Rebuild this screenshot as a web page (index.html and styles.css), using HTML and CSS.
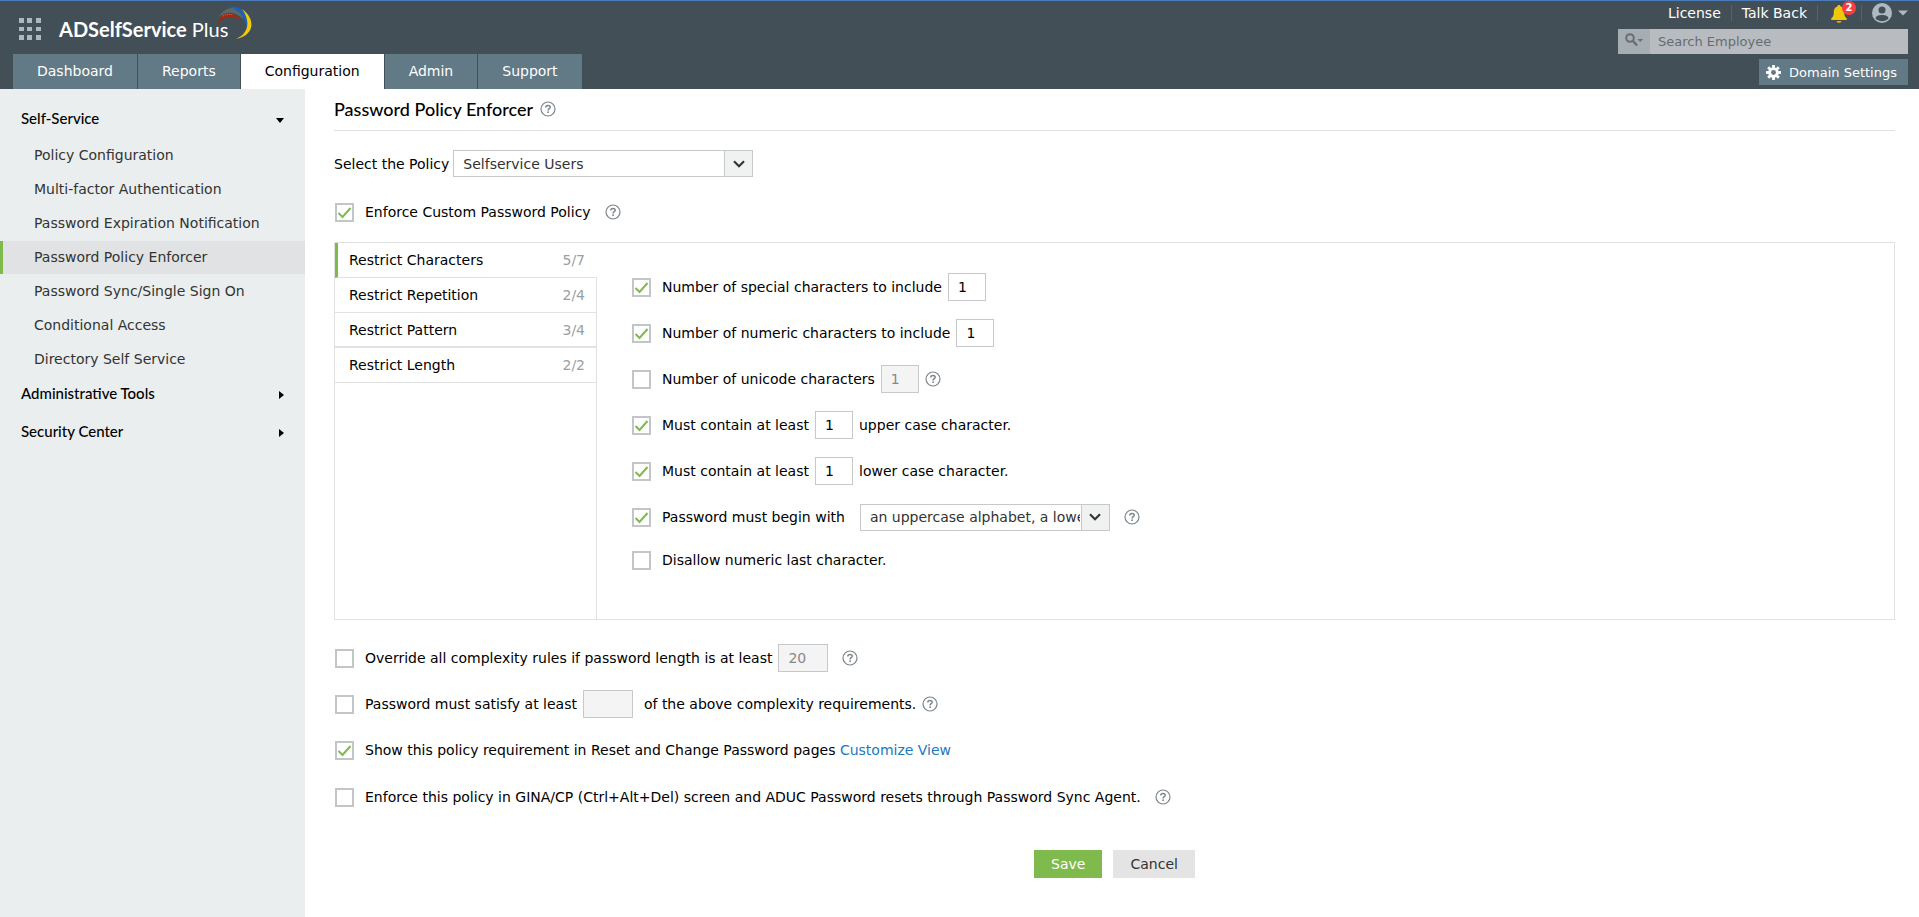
FILE: index.html
```html
<!DOCTYPE html>
<html lang="en">
<head>
  <meta charset="UTF-8">
  <meta name="viewport" content="width=device-width, initial-scale=1">
  <title>ADSelfService Plus</title>
  <link rel="stylesheet" href="styles.css">
</head>
<body>

<svg class="sprite" aria-hidden="true">
  <symbol id="help" viewBox="0 0 16 16">
    <circle cx="8" cy="8" r="7" fill="none" stroke="#7b858d" stroke-width="1.2"/>
    <path d="M5.8 6.5C5.8 5.1 6.7 4.4 8 4.4s2.2.7 2.2 1.8c0 1.5-2.1 1.5-2.1 3.2" fill="none" stroke="#7b858d" stroke-width="1.5"/>
    <rect x="7.3" y="10.4" width="1.6" height="1.6" fill="#7b858d"/>
  </symbol>
  <symbol id="chevron" viewBox="0 0 12 8">
    <path d="M1 1.2L6 6.2L11 1.2" fill="none" stroke="#30363a" stroke-width="2.2"/>
  </symbol>
</svg>

<header class="header">
  <div class="header-left">
    <div class="brand">
      <button class="apps" aria-label="Applications">
        <svg width="22" height="22" viewBox="0 0 22 22" fill="#adb8c0">
          <path d="M0 0h5v5H0zM8 0h5v5H8zM17 0h5v5h-5zM0 9h5v4H0zM8 9h5v4H8zM17 9h5v4h-5zM0 17h5v5H0zM8 17h5v5H8zM17 17h5v5h-5z"/>
        </svg>
      </button>
      <a href="#" class="logo">
        <b>ADSelfService</b> Plus
        <svg class="logo-arc" width="35" height="34" viewBox="0 0 35 34">
          <path d="M1 11C6 1 18-1 27 7L25 13C17 5 8 5 1 11z" fill="#5a6a6b"/>
          <path d="M11 1C22-2 33 8 29 25C28 12 22 4 11 1z" fill="#1f5fb5"/>
          <path d="M24 3C37 12 38 29 18 33C32 27 32 14 24 3z" fill="#f5cb0c"/>
          <path d="M18 33C22 32 25 30 27 28L25 30C23 31 21 32 18 33z" fill="#c96a22"/>
          <path d="M0 19C1 6 15 2 25 16C15 9 6 9 0 19z" fill="#9c2b12"/>
          <path d="M5 10C9 8 12 8 15 9" fill="none" stroke="#ff5a48" stroke-width="1" stroke-dasharray="1 1"/>
        </svg>
      </a>
    </div>
    <nav class="tabs">
      <a href="#">Dashboard</a>
      <a href="#">Reports</a>
      <a href="#" class="active">Configuration</a>
      <a href="#">Admin</a>
      <a href="#">Support</a>
    </nav>
  </div>

  <div class="header-right">
    <div class="user-links">
      <a href="#">License</a>
      <a href="#">Talk Back</a>
      <button class="bell" aria-label="Notifications">
        <svg width="16" height="18" viewBox="0 0 16 18">
          <path d="M8 0c1 0 1.600.6 1.600 1.500C12 2.200 13.200 4.200 13.200 7c0 3.500.8 4.800 2.500 6.300V15H.3v-1.700C2 11.800 2.800 10.500 2.800 7c0-2.800 1.200-4.800 3.600-5.500C6.400.6 7 0 8 0z" fill="#f0c808"/>
          <path d="M5.500 16h5c-.3 1.300-1.200 2-2.500 2s-2.200-.7-2.500-2z" fill="#f0a008"/>
        </svg>
        <span class="badge">2</span>
      </button>
      <button class="account" aria-label="Account">
        <svg width="20" height="20" viewBox="0 0 20 20">
          <circle cx="10" cy="10" r="10" fill="#aeb9c1"/>
          <circle cx="10" cy="7" r="3.500" fill="#434f57"/>
          <path d="M3.500 15.500C4 12.500 7 12 10 12s6 .5 6.500 3.500c-3.500 3.500-9.500 3.500-13 0z" fill="#434f57"/>
        </svg>
        <svg width="10" height="6" viewBox="0 0 10 6"><path d="M0 .5h10L5 5.500z" fill="#aeb9c1"/></svg>
      </button>
    </div>
    <div class="search">
      <button aria-label="Search options">
        <svg width="18" height="14" viewBox="0 0 18 14">
          <circle cx="5" cy="5" r="3.800" fill="none" stroke="#676e74" stroke-width="2"/>
          <path d="M8 8l4 4.500" stroke="#676e74" stroke-width="2.400"/>
          <path d="M12.500 6H18l-2.700 3z" fill="#676e74"/>
        </svg>
      </button>
      <input type="text" placeholder="Search Employee" aria-label="Search Employee">
    </div>
    <button class="domain">
      <svg width="15" height="15" viewBox="0 0 16 16">
        <g fill="#fff">
          <path id="tooth" d="M6.500 0h3v16h-3z"/>
          <use href="#tooth" transform="rotate(45 8 8)"/>
          <use href="#tooth" transform="rotate(90 8 8)"/>
          <use href="#tooth" transform="rotate(135 8 8)"/>
          <circle cx="8" cy="8" r="5.600"/>
        </g>
        <circle cx="8" cy="8" r="2.600" fill="#627986"/>
      </svg>
      Domain Settings
    </button>
  </div>
</header>

<div class="page">
  <aside class="sidebar">
    <button class="group">Self-Service <svg width="8" height="5" viewBox="0 0 8 5"><path d="M0 0h8L4 5z"/></svg></button>
    <nav class="menu">
      <a href="#">Policy Configuration</a>
      <a href="#">Multi-factor Authentication</a>
      <a href="#">Password Expiration Notification</a>
      <a href="#" class="active">Password Policy Enforcer</a>
      <a href="#">Password Sync/Single Sign On</a>
      <a href="#">Conditional Access</a>
      <a href="#">Directory Self Service</a>
    </nav>
    <button class="group">Administrative Tools <svg width="5" height="8" viewBox="0 0 5 8"><path d="M0 0v8l5-4z"/></svg></button>
    <button class="group">Security Center <svg width="5" height="8" viewBox="0 0 5 8"><path d="M0 0v8l5-4z"/></svg></button>
  </aside>

  <main class="content">
    <h1>Password Policy Enforcer <svg class="help"><use href="#help"/></svg></h1>

    <div class="policy">
      <label for="policy">Select the Policy</label>
      <div class="select policy-select">
        <select id="policy"><option>Selfservice Users</option></select>
        <span class="arrow"><svg width="12" height="8"><use href="#chevron"/></svg></span>
      </div>
    </div>

    <div class="row enforce">
      <input type="checkbox" id="enforce" checked>
      <label for="enforce">Enforce Custom Password Policy</label>
      <svg class="help far"><use href="#help"/></svg>
    </div>

    <section class="panel">
      <div class="rule-tabs">
        <button class="active">Restrict Characters <span>5/7</span></button>
        <button>Restrict Repetition <span>2/4</span></button>
        <button>Restrict Pattern <span>3/4</span></button>
        <button>Restrict Length <span>2/2</span></button>
      </div>
      <div class="rules">
        <div class="row">
          <input type="checkbox" id="special" checked>
          <label for="special">Number of special characters to include</label>
          <input type="text" value="1" aria-label="Special characters">
        </div>
        <div class="row">
          <input type="checkbox" id="numeric" checked>
          <label for="numeric">Number of numeric characters to include</label>
          <input type="text" value="1" aria-label="Numeric characters">
        </div>
        <div class="row">
          <input type="checkbox" id="unicode">
          <label for="unicode">Number of unicode characters</label>
          <input type="text" value="1" aria-label="Unicode characters" disabled>
          <svg class="help"><use href="#help"/></svg>
        </div>
        <div class="row">
          <input type="checkbox" id="upper" checked>
          <label for="upper">Must contain at least</label>
          <input type="text" id="upper-count" value="1">
          <label for="upper-count">upper case character.</label>
        </div>
        <div class="row">
          <input type="checkbox" id="lower" checked>
          <label for="lower">Must contain at least</label>
          <input type="text" id="lower-count" value="1">
          <label for="lower-count">lower case character.</label>
        </div>
        <div class="row">
          <input type="checkbox" id="begin" checked>
          <label for="begin">Password must begin with</label>
          <div class="select begin-select">
            <select aria-label="Password must begin with"><option>an uppercase alphabet, a lowercase alphabet</option></select>
            <span class="arrow"><svg width="12" height="8"><use href="#chevron"/></svg></span>
          </div>
          <svg class="help far"><use href="#help"/></svg>
        </div>
        <div class="row">
          <input type="checkbox" id="last">
          <label for="last">Disallow numeric last character.</label>
        </div>
      </div>
    </section>

    <div class="options">
      <div class="row">
        <input type="checkbox" id="override">
        <label for="override">Override all complexity rules if password length is at least</label>
        <input type="text" class="wide" value="20" aria-label="Password length" disabled>
        <svg class="help far"><use href="#help"/></svg>
      </div>
      <div class="row satisfy">
        <input type="checkbox" id="satisfy">
        <label for="satisfy">Password must satisfy at least</label>
        <input type="text" class="wide" id="satisfy-count" disabled>
        <label for="satisfy-count">of the above complexity requirements.</label>
        <svg class="help"><use href="#help"/></svg>
      </div>
      <div class="row">
        <input type="checkbox" id="show" checked>
        <span><label for="show">Show this policy requirement in Reset and Change Password pages</label> <a href="#">Customize View</a></span>
      </div>
      <div class="row">
        <input type="checkbox" id="gina">
        <label for="gina">Enforce this policy in GINA/CP (Ctrl+Alt+Del) screen and ADUC Password resets through Password Sync Agent.</label>
        <svg class="help far"><use href="#help"/></svg>
      </div>
    </div>

    <div class="actions">
      <button class="save">Save</button>
      <button class="cancel">Cancel</button>
    </div>
  </main>
</div>

</body>
</html>
```
FILE: styles.css
```css
* {
  box-sizing: border-box;
}
body {
  margin: 0;
  min-height: 100vh;
  display: flex;
  flex-direction: column;
  background: #fff;
  color: #000;
  font-family: "DejaVu Sans", Verdana, sans-serif;
  font-size: 14px;
}
button, input, select {
  font: inherit;
  color: inherit;
  border-radius: 0;
}
button {
  padding: 0;
  border: none;
  background: none;
  cursor: pointer;
}
a {
  color: #2179bd;
  text-decoration: none;
}
.sprite {
  display: none;
}

/* header */
.header {
  display: flex;
  justify-content: space-between;
  height: 89px;
  border-top: 1px solid #4a7ab8;
  background: #434f57;
  color: #fff;
}
.header a {
  color: #fff;
}
.header-left {
  display: flex;
  flex-direction: column;
  justify-content: space-between;
  padding-left: 13px;
}
.brand {
  display: flex;
  align-items: center;
  gap: 18px;
  padding: 13px 0 0 6px;
}
.apps svg {
  display: block;
}
.logo {
  position: relative;
  font-family: Lato, sans-serif;
  font-size: 20px;
  line-height: 30px;
}
.logo-arc {
  position: absolute;
  left: 159px;
  top: -8px;
}
.tabs {
  display: flex;
  gap: 1px;
}
.tabs a {
  padding: 0 24px;
  background: #627986;
  line-height: 35px;
}
.tabs .active {
  background: #fff;
  color: #000;
}
.header-right {
  display: flex;
  flex-direction: column;
  align-items: flex-end;
  padding-right: 11px;
}
.user-links {
  display: flex;
  align-items: center;
  height: 28px;
  padding-bottom: 4px;
}
.user-links > * {
  padding: 0 10px;
  border-left: 1px solid #55665c;
  line-height: 16px;
}
.user-links > :first-child {
  border: none;
}
.user-links .bell {
  position: relative;
  height: 16px;
  padding: 0 14px 0 13px;
}
.bell svg {
  display: block;
}
.badge {
  position: absolute;
  top: -4px;
  right: 5px;
  width: 14px;
  height: 14px;
  border-radius: 50%;
  background: #f93e3e;
  color: #fff;
  font-size: 10px;
  font-weight: bold;
  line-height: 14px;
}
.user-links .account {
  display: flex;
  align-items: center;
  gap: 6px;
  height: 16px;
  padding-right: 0;
}
.search {
  display: flex;
  width: 290px;
  height: 25px;
  font-size: 13px;
}
.search button {
  width: 32px;
  background: #a6aeb3;
}
.search input {
  flex: 1;
  min-width: 0;
  padding: 0 8px;
  border: none;
  background: #b8bcc1;
}
.search input::placeholder {
  color: #666c72;
}
.domain {
  display: flex;
  align-items: center;
  gap: 8px;
  height: 26px;
  margin-top: 5px;
  padding: 0 11px 0 7px;
  background: #627986;
  color: #fff;
  font-size: 13px;
}

/* sidebar */
.page {
  display: flex;
  flex: 1;
}
.sidebar {
  flex: 0 0 305px;
  padding-top: 12px;
  background: #eaeeef;
}
.group {
  display: flex;
  align-items: center;
  justify-content: space-between;
  width: 100%;
  height: 34px;
  margin-bottom: 4px;
  padding: 0 21px;
  font-family: Lato, sans-serif;
  font-size: 15px;
  font-weight: 500;
}
.group svg {
  margin-top: 4px;
}
.menu {
  display: flex;
  flex-direction: column;
  gap: 1px;
}
.menu a {
  padding-left: 31px;
  border-left: 3px solid transparent;
  color: #333;
  line-height: 33px;
}
.menu .active {
  border-color: #7fba4c;
  background: #e0e2e4;
}

/* content */
.content {
  flex: 1;
  min-width: 0;
  padding: 0 24px 30px 29px;
}
h1 {
  display: flex;
  align-items: center;
  gap: 7px;
  height: 42px;
  margin: 0 0 19px;
  padding-bottom: 2px;
  border-bottom: 1px solid #e0e0e0;
  font-family: Lato, sans-serif;
  font-size: 18px;
  font-weight: 500;
}
.help {
  width: 16px;
  height: 16px;
  flex: none;
}
.policy {
  display: flex;
  align-items: center;
  gap: 4px;
}
.select {
  position: relative;
  height: 27px;
}
.select select {
  width: 100%;
  height: 100%;
  padding: 0 29px 0 9px;
  border: 1px solid #c6c8ca;
  background: #fff;
  color: #333;
  appearance: none;
}
.policy-select {
  width: 300px;
}
.begin-select {
  width: 250px;
  margin-left: 9px;
}
.arrow {
  position: absolute;
  top: 0;
  right: 0;
  display: flex;
  align-items: center;
  justify-content: center;
  width: 29px;
  height: 27px;
  border: 1px solid #c6c8ca;
  background: #f0f2f2;
  pointer-events: none;
}
.row {
  display: flex;
  align-items: center;
  gap: 6px;
  height: 28px;
}
.row input[type="checkbox"] {
  flex: none;
  width: 19px;
  height: 19px;
  margin: 0 5px 0 1px;
  border: 2px solid #c3c6c9;
  background: #fff;
  appearance: none;
}
.row input[type="checkbox"]:checked {
  background: #fff url("data:image/svg+xml,%3Csvg xmlns='http://www.w3.org/2000/svg' viewBox='0 0 15 15'%3E%3Cpath d='M1.500 8L5.500 12L13.500 3' fill='none' stroke='%237fba4c' stroke-width='2'/%3E%3C/svg%3E") center / 15px 15px no-repeat;
}
.row input[type="text"] {
  width: 38px;
  height: 28px;
  padding: 0 9px;
  border: 1px solid #c6c8ca;
  background: #fff;
}
.row input[type="text"]:disabled {
  background: #f4f4f4;
  color: #888;
}
.row input.wide {
  width: 50px;
}
.row .far {
  margin-left: 8px;
}
.enforce {
  margin: 21px 0 16px;
}
.panel {
  display: flex;
  min-height: 378px;
  border: 1px solid #e1e2e3;
}
.rule-tabs {
  display: flex;
  flex-direction: column;
  width: 262px;
  background: linear-gradient(#e1e2e3, #e1e2e3) right 0 top 35px / 1px 100% no-repeat;
}
.rule-tabs button {
  display: flex;
  align-items: center;
  justify-content: space-between;
  height: 35px;
  padding: 0 12px 0 14px;
  border-bottom: 1px solid #e1e2e3;
}
.rule-tabs button:nth-child(3) {
  border-bottom-width: 2px;
}
.rule-tabs .active {
  padding-left: 11px;
  border-left: 3px solid #7fba4c;
}
.rule-tabs span {
  color: #98a0a3;
}
.rules {
  display: flex;
  flex-direction: column;
  gap: 18px;
  padding: 30px 0 0 34px;
}
.rules .row:last-child {
  margin-top: -3px;
}
.options {
  display: flex;
  flex-direction: column;
  gap: 18px;
  margin-top: 24px;
}
.options .row:last-child {
  margin-top: 1px;
}
.satisfy .wide {
  margin-right: 5px;
}
.actions {
  display: flex;
  justify-content: center;
  gap: 11px;
  margin-top: 39px;
}
.actions button {
  height: 28px;
  padding: 0 17px;
}
.save {
  background: #7fba4c;
  color: #fff;
}
.cancel {
  background: #e4e4e4;
  color: #333;
}
```
